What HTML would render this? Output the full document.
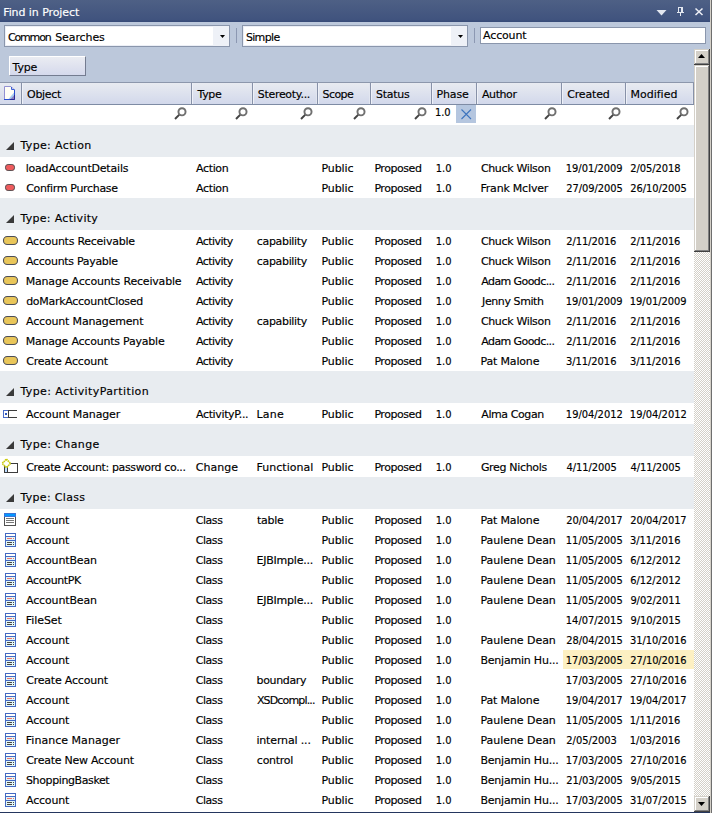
<!DOCTYPE html><html><head><meta charset="utf-8"><title>Find in Project</title><style>
html,body{margin:0;padding:0}
body{width:712px;height:813px;overflow:hidden;position:relative;background:#bcc8db;font-family:"DejaVu Sans","Liberation Sans",sans-serif;font-size:11px;color:#000}
div,span{position:absolute;white-space:nowrap;box-sizing:border-box}
span{line-height:13px;-webkit-text-stroke:0.15px currentColor}
.n{font-family:"DejaVu Sans Condensed","DejaVu Sans","Liberation Sans",sans-serif}
#title{left:0;top:0;width:710px;height:22px;background:linear-gradient(#4e6085 0,#40537e 20px,#384c79 21px,#384c79 22px)}
#title span{top:6px;color:#fff}
.combo{top:25px;height:22px;background:#fff;border:1px solid #8a96ac;box-shadow:inset 0 0 0 1px #eceff6}
.combo span{top:5px}
.combo i{position:absolute;right:0;top:0;width:16px;height:20px;background:#eef1f7}
.combo i:after{content:"";position:absolute;left:7px;top:9px;width:5px;height:3px;background:#000;clip-path:polygon(0 0,100% 0,50% 100%)}
.sep{top:28px;width:1px;height:15px;background:#8c98b2}
#btn{left:9px;top:56px;width:77px;height:20px;background:linear-gradient(#eaecf2,#d5d9ec);border:1px solid #747c90;border-top-color:#fff;border-left-color:#fff}
#btn span{top:4px}
#hdr{left:0;top:82px;width:694px;height:23px;background:linear-gradient(#e8ebf1,#d2d8eb);border-top:1px solid #8c97ac;border-bottom:1px solid #7e8ba4}
#hdr b{position:absolute;top:0;width:1px;height:21px;background:#8791a8;box-shadow:1px 0 0 #eef1f8,-1px 0 0 #e2e6f0}
#hdr span{top:5px}
#filt{left:0;top:105px;width:694px;height:20px;background:#fff}
.mag{position:absolute;top:2px}
#list{left:0;top:125px;width:694px;height:687px;background:#fff;overflow:hidden}
.g{left:0;width:694px;height:32px;background:#e8ecf0}
.g span{top:14px}
.g i{position:absolute;left:6px;top:17px;width:0;height:0;border-left:8px solid transparent;border-bottom:8px solid #3a3a3a}
.r{left:0;width:694px;height:20px}
.r span{top:4px}
.ic{position:absolute}
.hl{left:563px;top:0;width:131px;height:19px;background:#fdf0c2}
#sb{left:694px;top:49px;width:16px;height:763px;background-color:#eae8e3;background-image:conic-gradient(#fff 25%,#d4d0c8 0 50%,#fff 0 75%,#d4d0c8 0);background-size:2px 2px}
.b3{left:0;width:16px;background:#d4d0c8;box-shadow:inset -1px -1px 0 #404040,inset 1px 1px 0 #d4d0c8,inset -2px -2px 0 #808080,inset 2px 2px 0 #fff}
.b3 svg{position:absolute;left:3px}
#rb1{left:710px;top:0;width:1px;height:813px;background:#d4d0c8}
#rb2{left:711px;top:0;width:1px;height:813px;background:#6e6e6e}
#bb{left:0;top:812px;width:710px;height:1px;background:#24365e}
</style></head><body>
<div id="title"><span style="left:3.19px;letter-spacing:-0.076px;">Find in Project</span><svg style="position:absolute;left:655px;top:6px" width="52" height="12" viewBox="0 0 52 12"><path d="M1.5 4H11.5L6.5 9.5Z" fill="#e3e7f0"/><path d="M23 1H28V6H29V7H26V10H25V7H22V6H23ZM24 2V6H26V2Z" fill="#e4e8f0" fill-rule="evenodd"/><path d="M40.5 2.5L47.5 9M47.5 2.5L40.5 9" stroke="#eef0f6" stroke-width="1.5"/></svg></div>
<div class="combo" style="left:4px;width:226px"><span style="left:7.91px;letter-spacing:-1.147px;margin-left:-5px">Common</span> <span style="left:55.19px;letter-spacing:-0.096px;margin-left:-5px">Searches</span><i></i></div>
<div class="sep" style="left:236px"></div>
<div class="combo" style="left:242px;width:226px"><span style="left:245.89px;letter-spacing:-0.657px;margin-left:-243px">Simple</span><i></i></div>
<div class="sep" style="left:474px"></div>
<div class="combo" style="left:480px;top:27px;width:226px;height:17px;box-shadow:none"><span style="left:483.08px;letter-spacing:-0.16px;margin-left:-481px;top:1px">Account</span></div>
<div id="btn"><span style="left:12.6px;letter-spacing:-0.219px;margin-left:-10px">Type</span></div>
<div id="hdr"><b style="left:21px"></b><b style="left:191px"></b><b style="left:252px"></b><b style="left:317px"></b><b style="left:370px"></b><b style="left:431px"></b><b style="left:476px"></b><b style="left:561px"></b><b style="left:625px"></b><b style="left:693px"></b><span style="left:27.11px;letter-spacing:-0.313px;">Object</span><span style="left:197.5px;letter-spacing:-0.369px;">Type</span><span style="left:257.79px;letter-spacing:-0.304px;">Stereoty...</span><span style="left:322.54px;letter-spacing:-0.571px;">Scope</span><span style="left:376.04px;letter-spacing:-0.265px;">Status</span><span style="left:436.49px;letter-spacing:-0.149px;">Phase</span><span style="left:482.03px;letter-spacing:-0.43px;">Author</span><span style="left:567.16px;letter-spacing:-0.143px;">Created</span><span style="left:630.49px;letter-spacing:0.001px;">Modified</span><svg style="position:absolute;left:4px;top:3px" width="11" height="14" viewBox="0 0 11 14"><path d="M0.5 0.5H7L10.5 4V13.5H0.5Z" fill="#fffef6"/><path d="M10 6.5V13H4.5Z" fill="#a9cdf2"/><path d="M10 9.5V13H6.5Z" fill="#8a80c4"/><path d="M0.5 13V0.5H7" fill="none" stroke="#9290d2"/><path d="M7 0.5L10.5 4" stroke="#9290d2" fill="none"/><path d="M7.5 1V3.5H10" fill="none" stroke="#3a5fd6"/><path d="M10.5 3.5V13.5H0" fill="none" stroke="#2a4fd0"/><path d="M10.5 9V13.5H6" fill="none" stroke="#2c2a96"/></svg></div>
<div id="filt"><svg class="mag" style="left:174px" width="13" height="13" viewBox="0 0 13 13"><path d="M5.6 7.4L1 12" stroke="#444" stroke-width="2" stroke-linecap="butt"/><circle cx="8" cy="4.8" r="3.55" fill="#fff" stroke="#707070" stroke-width="1.95"/></svg><svg class="mag" style="left:235px" width="13" height="13" viewBox="0 0 13 13"><path d="M5.6 7.4L1 12" stroke="#444" stroke-width="2" stroke-linecap="butt"/><circle cx="8" cy="4.8" r="3.55" fill="#fff" stroke="#707070" stroke-width="1.95"/></svg><svg class="mag" style="left:300px" width="13" height="13" viewBox="0 0 13 13"><path d="M5.6 7.4L1 12" stroke="#444" stroke-width="2" stroke-linecap="butt"/><circle cx="8" cy="4.8" r="3.55" fill="#fff" stroke="#707070" stroke-width="1.95"/></svg><svg class="mag" style="left:353px" width="13" height="13" viewBox="0 0 13 13"><path d="M5.6 7.4L1 12" stroke="#444" stroke-width="2" stroke-linecap="butt"/><circle cx="8" cy="4.8" r="3.55" fill="#fff" stroke="#707070" stroke-width="1.95"/></svg><svg class="mag" style="left:414px" width="13" height="13" viewBox="0 0 13 13"><path d="M5.6 7.4L1 12" stroke="#444" stroke-width="2" stroke-linecap="butt"/><circle cx="8" cy="4.8" r="3.55" fill="#fff" stroke="#707070" stroke-width="1.95"/></svg><svg class="mag" style="left:544px" width="13" height="13" viewBox="0 0 13 13"><path d="M5.6 7.4L1 12" stroke="#444" stroke-width="2" stroke-linecap="butt"/><circle cx="8" cy="4.8" r="3.55" fill="#fff" stroke="#707070" stroke-width="1.95"/></svg><svg class="mag" style="left:608px" width="13" height="13" viewBox="0 0 13 13"><path d="M5.6 7.4L1 12" stroke="#444" stroke-width="2" stroke-linecap="butt"/><circle cx="8" cy="4.8" r="3.55" fill="#fff" stroke="#707070" stroke-width="1.95"/></svg><svg class="mag" style="left:676px" width="13" height="13" viewBox="0 0 13 13"><path d="M5.6 7.4L1 12" stroke="#444" stroke-width="2" stroke-linecap="butt"/><circle cx="8" cy="4.8" r="3.55" fill="#fff" stroke="#707070" stroke-width="1.95"/></svg><span class="n" style="left:435.05px;letter-spacing:-0.176px;top:1px">1.0</span><div style="left:456px;top:0;width:20px;height:18px;background:#b5c6df"><svg style="position:absolute;left:5px;top:4px" width="11" height="11" viewBox="0 0 11 11"><path d="M0.5 0.5L10 10M10 0.5L0.5 10" stroke="#3d74be" stroke-width="1.1"/></svg></div></div>
<div id="list"><div class="g" style="top:0px"><i></i><span style="left:20.4px;letter-spacing:0.361px;">Type: Action</span></div><div class="r" style="top:33px"><svg class="ic" style="left:4px;top:5px" width="12" height="9" viewBox="0 0 12 9"><rect x="1.5" y="1.5" width="9" height="6" rx="2.6" ry="2.6" fill="#ee5b5d" stroke="#5a5052" stroke-width="1"/></svg><span style="left:25.65px;letter-spacing:-0.187px;">loadAccountDetails</span><span style="left:196.03px;letter-spacing:-0.351px;">Action</span><span style="left:321.39px;letter-spacing:-0.071px;">Public</span><span style="left:374.39px;letter-spacing:-0.446px;">Proposed</span><span class="n" style="left:435.85px;letter-spacing:-0.076px;">1.0</span><span style="left:480.91px;letter-spacing:-0.343px;">Chuck Wilson</span><span class="n" style="left:565.85px;letter-spacing:-0.039px;">19/01/2009</span><span class="n" style="left:630.34px;letter-spacing:-0.076px;">2/05/2018</span></div><div class="r" style="top:53px"><svg class="ic" style="left:4px;top:5px" width="12" height="9" viewBox="0 0 12 9"><rect x="1.5" y="1.5" width="9" height="6" rx="2.6" ry="2.6" fill="#ee5b5d" stroke="#5a5052" stroke-width="1"/></svg><span style="left:26.16px;letter-spacing:-0.334px;">Confirm Purchase</span><span style="left:196.03px;letter-spacing:-0.351px;">Action</span><span style="left:321.39px;letter-spacing:-0.071px;">Public</span><span style="left:374.39px;letter-spacing:-0.446px;">Proposed</span><span class="n" style="left:435.85px;letter-spacing:-0.076px;">1.0</span><span style="left:480.49px;letter-spacing:-0.213px;">Frank McIver</span><span class="n" style="left:566.34px;letter-spacing:-0.075px;">27/09/2005</span><span class="n" style="left:630.34px;letter-spacing:-0.075px;">26/10/2005</span></div><div class="g" style="top:73px"><i></i><span style="left:20.4px;letter-spacing:0.299px;">Type: Activity</span></div><div class="r" style="top:106px"><svg class="ic" style="left:2px;top:4px" width="17" height="11" viewBox="0 0 17 11"><rect x="1.5" y="1.5" width="14" height="8" rx="3.8" ry="3.8" fill="#e9c65a" stroke="#4c4e58" stroke-width="1.1"/></svg><span style="left:26.03px;letter-spacing:-0.252px;">Accounts Receivable</span><span style="left:196.03px;letter-spacing:-0.553px;">Activity</span><span style="left:256.87px;letter-spacing:-0.343px;">capability</span><span style="left:321.39px;letter-spacing:-0.071px;">Public</span><span style="left:374.39px;letter-spacing:-0.446px;">Proposed</span><span class="n" style="left:435.85px;letter-spacing:-0.076px;">1.0</span><span style="left:480.91px;letter-spacing:-0.343px;">Chuck Wilson</span><span class="n" style="left:566.34px;letter-spacing:-0.082px;">2/11/2016</span><span class="n" style="left:630.34px;letter-spacing:-0.082px;">2/11/2016</span></div><div class="r" style="top:126px"><svg class="ic" style="left:2px;top:4px" width="17" height="11" viewBox="0 0 17 11"><rect x="1.5" y="1.5" width="14" height="8" rx="3.8" ry="3.8" fill="#e9c65a" stroke="#4c4e58" stroke-width="1.1"/></svg><span style="left:26.03px;letter-spacing:-0.302px;">Accounts Payable</span><span style="left:196.03px;letter-spacing:-0.553px;">Activity</span><span style="left:256.87px;letter-spacing:-0.343px;">capability</span><span style="left:321.39px;letter-spacing:-0.071px;">Public</span><span style="left:374.39px;letter-spacing:-0.446px;">Proposed</span><span class="n" style="left:435.85px;letter-spacing:-0.076px;">1.0</span><span style="left:480.91px;letter-spacing:-0.343px;">Chuck Wilson</span><span class="n" style="left:566.34px;letter-spacing:-0.082px;">2/11/2016</span><span class="n" style="left:630.34px;letter-spacing:-0.082px;">2/11/2016</span></div><div class="r" style="top:146px"><svg class="ic" style="left:2px;top:4px" width="17" height="11" viewBox="0 0 17 11"><rect x="1.5" y="1.5" width="14" height="8" rx="3.8" ry="3.8" fill="#e9c65a" stroke="#4c4e58" stroke-width="1.1"/></svg><span style="left:25.74px;letter-spacing:-0.194px;">Manage Accounts Receivable</span><span style="left:196.03px;letter-spacing:-0.553px;">Activity</span><span style="left:321.39px;letter-spacing:-0.071px;">Public</span><span style="left:374.39px;letter-spacing:-0.446px;">Proposed</span><span class="n" style="left:435.85px;letter-spacing:-0.076px;">1.0</span><span style="left:481.28px;letter-spacing:-0.587px;">Adam Goodc...</span><span class="n" style="left:566.34px;letter-spacing:-0.082px;">2/11/2016</span><span class="n" style="left:630.34px;letter-spacing:-0.082px;">2/11/2016</span></div><div class="r" style="top:166px"><svg class="ic" style="left:2px;top:4px" width="17" height="11" viewBox="0 0 17 11"><rect x="1.5" y="1.5" width="14" height="8" rx="3.8" ry="3.8" fill="#e9c65a" stroke="#4c4e58" stroke-width="1.1"/></svg><span style="left:26.13px;letter-spacing:-0.28px;">doMarkAccountClosed</span><span style="left:196.03px;letter-spacing:-0.553px;">Activity</span><span style="left:321.39px;letter-spacing:-0.071px;">Public</span><span style="left:374.39px;letter-spacing:-0.446px;">Proposed</span><span class="n" style="left:435.85px;letter-spacing:-0.076px;">1.0</span><span style="left:482.1px;letter-spacing:-0.413px;">Jenny Smith</span><span class="n" style="left:565.85px;letter-spacing:-0.039px;">19/01/2009</span><span class="n" style="left:629.85px;letter-spacing:-0.039px;">19/01/2009</span></div><div class="r" style="top:186px"><svg class="ic" style="left:2px;top:4px" width="17" height="11" viewBox="0 0 17 11"><rect x="1.5" y="1.5" width="14" height="8" rx="3.8" ry="3.8" fill="#e9c65a" stroke="#4c4e58" stroke-width="1.1"/></svg><span style="left:26.03px;letter-spacing:-0.171px;">Account Management</span><span style="left:196.03px;letter-spacing:-0.553px;">Activity</span><span style="left:256.87px;letter-spacing:-0.343px;">capability</span><span style="left:321.39px;letter-spacing:-0.071px;">Public</span><span style="left:374.39px;letter-spacing:-0.446px;">Proposed</span><span class="n" style="left:435.85px;letter-spacing:-0.076px;">1.0</span><span style="left:480.91px;letter-spacing:-0.343px;">Chuck Wilson</span><span class="n" style="left:566.34px;letter-spacing:-0.082px;">2/11/2016</span><span class="n" style="left:630.34px;letter-spacing:-0.082px;">2/11/2016</span></div><div class="r" style="top:206px"><svg class="ic" style="left:2px;top:4px" width="17" height="11" viewBox="0 0 17 11"><rect x="1.5" y="1.5" width="14" height="8" rx="3.8" ry="3.8" fill="#e9c65a" stroke="#4c4e58" stroke-width="1.1"/></svg><span style="left:25.74px;letter-spacing:-0.22px;">Manage Accounts Payable</span><span style="left:196.03px;letter-spacing:-0.553px;">Activity</span><span style="left:321.39px;letter-spacing:-0.071px;">Public</span><span style="left:374.39px;letter-spacing:-0.446px;">Proposed</span><span class="n" style="left:435.85px;letter-spacing:-0.076px;">1.0</span><span style="left:481.28px;letter-spacing:-0.587px;">Adam Goodc...</span><span class="n" style="left:566.34px;letter-spacing:-0.082px;">2/11/2016</span><span class="n" style="left:630.34px;letter-spacing:-0.082px;">2/11/2016</span></div><div class="r" style="top:226px"><svg class="ic" style="left:2px;top:4px" width="17" height="11" viewBox="0 0 17 11"><rect x="1.5" y="1.5" width="14" height="8" rx="3.8" ry="3.8" fill="#e9c65a" stroke="#4c4e58" stroke-width="1.1"/></svg><span style="left:26.16px;letter-spacing:-0.194px;">Create Account</span><span style="left:196.03px;letter-spacing:-0.553px;">Activity</span><span style="left:321.39px;letter-spacing:-0.071px;">Public</span><span style="left:374.39px;letter-spacing:-0.446px;">Proposed</span><span class="n" style="left:435.85px;letter-spacing:-0.076px;">1.0</span><span style="left:480.49px;letter-spacing:-0.166px;">Pat Malone</span><span class="n" style="left:566.0px;letter-spacing:-0.039px;">3/11/2016</span><span class="n" style="left:630.0px;letter-spacing:-0.039px;">3/11/2016</span></div><div class="g" style="top:246px"><i></i><span style="left:20.4px;letter-spacing:0.403px;">Type: ActivityPartition</span></div><div class="r" style="top:279px"><svg shape-rendering="crispEdges" class="ic" style="left:3px;top:6px" width="15" height="8" viewBox="0 0 15 8"><path d="M5.5 0.5H14M5.5 7.5H14M5.5 0V8" stroke="#3c3c3c" fill="none"/><path d="M5 0.5H0.5V7.5H5" fill="none" stroke="#4a6cc8"/><rect x="2" y="3" width="2" height="2" fill="#2f57c0"/></svg><span style="left:26.03px;letter-spacing:-0.136px;">Account Manager</span><span style="left:196.03px;letter-spacing:-0.366px;">ActivityP...</span><span style="left:256.49px;letter-spacing:0.253px;">Lane</span><span style="left:321.39px;letter-spacing:-0.071px;">Public</span><span style="left:374.39px;letter-spacing:-0.446px;">Proposed</span><span class="n" style="left:435.85px;letter-spacing:-0.076px;">1.0</span><span style="left:481.28px;letter-spacing:-0.405px;">Alma Cogan</span><span class="n" style="left:565.85px;letter-spacing:-0.013px;">19/04/2012</span><span class="n" style="left:629.85px;letter-spacing:-0.013px;">19/04/2012</span></div><div class="g" style="top:299px"><i></i><span style="left:20.4px;letter-spacing:0.395px;">Type: Change</span></div><div class="r" style="top:332px"><svg class="ic" style="left:1px;top:1px" width="18" height="16" viewBox="0 0 18 16"><rect x="3.5" y="5.5" width="13" height="9" fill="#fff" stroke="#3c3c3c"/><path d="M6.5 5.5V14.5" stroke="#3c3c3c"/><rect x="4" y="8" width="2" height="6" fill="#bddcff"/><path d="M5.4 1.2L9.6 5.4L5.4 9.6L1.2 5.4Z" fill="#fff" stroke="#c9cb10" stroke-width="1.7" stroke-dasharray="1.5 0.5"/></svg><span style="left:26.16px;letter-spacing:-0.368px;">Create Account: password co...</span><span style="left:195.66px;letter-spacing:0.046px;">Change</span><span style="left:256.49px;letter-spacing:0.032px;">Functional</span><span style="left:321.39px;letter-spacing:-0.071px;">Public</span><span style="left:374.39px;letter-spacing:-0.446px;">Proposed</span><span class="n" style="left:435.85px;letter-spacing:-0.076px;">1.0</span><span style="left:480.91px;letter-spacing:-0.323px;">Greg Nichols</span><span class="n" style="left:566.6px;letter-spacing:-0.06px;">4/11/2005</span><span class="n" style="left:630.6px;letter-spacing:-0.06px;">4/11/2005</span></div><div class="g" style="top:352px"><i></i><span style="left:20.4px;letter-spacing:0.318px;">Type: Class</span></div><div class="r" style="top:385px"><svg shape-rendering="crispEdges" class="ic" style="left:4px;top:3px" width="12" height="13" viewBox="0 0 12 13"><rect x="0.5" y="0.5" width="11" height="12" fill="#fff" stroke="#505050"/><rect x="0" y="0" width="12" height="4" fill="#3a74d8"/><rect x="1" y="1" width="10" height="2" fill="#0497ff"/><path d="M2 5.5H10M2 7.5H10M2 9.5H10" stroke="#777"/></svg><span style="left:26.03px;letter-spacing:-0.193px;">Account</span><span style="left:195.66px;letter-spacing:-0.424px;">Class</span><span style="left:257.11px;letter-spacing:-0.305px;">table</span><span style="left:321.39px;letter-spacing:-0.071px;">Public</span><span style="left:374.39px;letter-spacing:-0.446px;">Proposed</span><span class="n" style="left:435.85px;letter-spacing:-0.076px;">1.0</span><span style="left:480.49px;letter-spacing:-0.166px;">Pat Malone</span><span class="n" style="left:566.34px;letter-spacing:-0.078px;">20/04/2017</span><span class="n" style="left:630.34px;letter-spacing:-0.078px;">20/04/2017</span></div><div class="r" style="top:405px"><svg shape-rendering="crispEdges" class="ic" style="left:5px;top:3px" width="11" height="14" viewBox="0 0 11 14"><rect x="0.5" y="0.5" width="10" height="13" fill="#e2f8f8" stroke="#4369c2"/><rect x="1" y="1" width="9" height="2" fill="#fff"/><path d="M0.5 3.5H10.5M0.5 7.5H10.5" stroke="#4369c2"/><path d="M2 5.5H7M8 5.5H9" stroke="#ee7070"/><path d="M2 9.5H7M8 9.5H9M2 11.5H7M8 11.5H9" stroke="#4a4444"/></svg><span style="left:26.03px;letter-spacing:-0.193px;">Account</span><span style="left:195.66px;letter-spacing:-0.424px;">Class</span><span style="left:321.39px;letter-spacing:-0.071px;">Public</span><span style="left:374.39px;letter-spacing:-0.446px;">Proposed</span><span class="n" style="left:435.85px;letter-spacing:-0.076px;">1.0</span><span style="left:480.49px;letter-spacing:-0.047px;">Paulene Dean</span><span class="n" style="left:565.85px;letter-spacing:-0.021px;">11/05/2005</span><span class="n" style="left:630.0px;letter-spacing:-0.039px;">3/11/2016</span></div><div class="r" style="top:425px"><svg shape-rendering="crispEdges" class="ic" style="left:5px;top:3px" width="11" height="14" viewBox="0 0 11 14"><rect x="0.5" y="0.5" width="10" height="13" fill="#e2f8f8" stroke="#4369c2"/><rect x="1" y="1" width="9" height="2" fill="#fff"/><path d="M0.5 3.5H10.5M0.5 7.5H10.5" stroke="#4369c2"/><path d="M2 5.5H7M8 5.5H9" stroke="#ee7070"/><path d="M2 9.5H7M8 9.5H9M2 11.5H7M8 11.5H9" stroke="#4a4444"/></svg><span style="left:26.03px;letter-spacing:-0.15px;">AccountBean</span><span style="left:195.66px;letter-spacing:-0.424px;">Class</span><span style="left:256.49px;letter-spacing:-0.222px;">EJBImple...</span><span style="left:321.39px;letter-spacing:-0.071px;">Public</span><span style="left:374.39px;letter-spacing:-0.446px;">Proposed</span><span class="n" style="left:435.85px;letter-spacing:-0.076px;">1.0</span><span style="left:480.49px;letter-spacing:-0.047px;">Paulene Dean</span><span class="n" style="left:565.85px;letter-spacing:-0.021px;">11/05/2005</span><span class="n" style="left:630.32px;letter-spacing:-0.04px;">6/12/2012</span></div><div class="r" style="top:445px"><svg shape-rendering="crispEdges" class="ic" style="left:5px;top:3px" width="11" height="14" viewBox="0 0 11 14"><rect x="0.5" y="0.5" width="10" height="13" fill="#e2f8f8" stroke="#4369c2"/><rect x="1" y="1" width="9" height="2" fill="#fff"/><path d="M0.5 3.5H10.5M0.5 7.5H10.5" stroke="#4369c2"/><path d="M2 5.5H7M8 5.5H9" stroke="#ee7070"/><path d="M2 9.5H7M8 9.5H9M2 11.5H7M8 11.5H9" stroke="#4a4444"/></svg><span style="left:26.03px;letter-spacing:-0.374px;">AccountPK</span><span style="left:195.66px;letter-spacing:-0.424px;">Class</span><span style="left:321.39px;letter-spacing:-0.071px;">Public</span><span style="left:374.39px;letter-spacing:-0.446px;">Proposed</span><span class="n" style="left:435.85px;letter-spacing:-0.076px;">1.0</span><span style="left:480.49px;letter-spacing:-0.047px;">Paulene Dean</span><span class="n" style="left:565.85px;letter-spacing:-0.021px;">11/05/2005</span><span class="n" style="left:630.32px;letter-spacing:-0.04px;">6/12/2012</span></div><div class="r" style="top:465px"><svg shape-rendering="crispEdges" class="ic" style="left:5px;top:3px" width="11" height="14" viewBox="0 0 11 14"><rect x="0.5" y="0.5" width="10" height="13" fill="#e2f8f8" stroke="#4369c2"/><rect x="1" y="1" width="9" height="2" fill="#fff"/><path d="M0.5 3.5H10.5M0.5 7.5H10.5" stroke="#4369c2"/><path d="M2 5.5H7M8 5.5H9" stroke="#ee7070"/><path d="M2 9.5H7M8 9.5H9M2 11.5H7M8 11.5H9" stroke="#4a4444"/></svg><span style="left:26.03px;letter-spacing:-0.15px;">AccountBean</span><span style="left:195.66px;letter-spacing:-0.424px;">Class</span><span style="left:256.49px;letter-spacing:-0.222px;">EJBImple...</span><span style="left:321.39px;letter-spacing:-0.071px;">Public</span><span style="left:374.39px;letter-spacing:-0.446px;">Proposed</span><span class="n" style="left:435.85px;letter-spacing:-0.076px;">1.0</span><span style="left:480.49px;letter-spacing:-0.047px;">Paulene Dean</span><span class="n" style="left:565.85px;letter-spacing:-0.021px;">11/05/2005</span><span class="n" style="left:630.38px;letter-spacing:-0.048px;">9/02/2011</span></div><div class="r" style="top:485px"><svg shape-rendering="crispEdges" class="ic" style="left:5px;top:3px" width="11" height="14" viewBox="0 0 11 14"><rect x="0.5" y="0.5" width="10" height="13" fill="#e2f8f8" stroke="#4369c2"/><rect x="1" y="1" width="9" height="2" fill="#fff"/><path d="M0.5 3.5H10.5M0.5 7.5H10.5" stroke="#4369c2"/><path d="M2 5.5H7M8 5.5H9" stroke="#ee7070"/><path d="M2 9.5H7M8 9.5H9M2 11.5H7M8 11.5H9" stroke="#4a4444"/></svg><span style="left:25.74px;letter-spacing:-0.058px;">FileSet</span><span style="left:195.66px;letter-spacing:-0.424px;">Class</span><span style="left:321.39px;letter-spacing:-0.071px;">Public</span><span style="left:374.39px;letter-spacing:-0.446px;">Proposed</span><span class="n" style="left:435.85px;letter-spacing:-0.076px;">1.0</span><span class="n" style="left:565.85px;letter-spacing:-0.021px;">14/07/2015</span><span class="n" style="left:630.38px;letter-spacing:-0.032px;">9/10/2015</span></div><div class="r" style="top:505px"><svg shape-rendering="crispEdges" class="ic" style="left:5px;top:3px" width="11" height="14" viewBox="0 0 11 14"><rect x="0.5" y="0.5" width="10" height="13" fill="#e2f8f8" stroke="#4369c2"/><rect x="1" y="1" width="9" height="2" fill="#fff"/><path d="M0.5 3.5H10.5M0.5 7.5H10.5" stroke="#4369c2"/><path d="M2 5.5H7M8 5.5H9" stroke="#ee7070"/><path d="M2 9.5H7M8 9.5H9M2 11.5H7M8 11.5H9" stroke="#4a4444"/></svg><span style="left:26.03px;letter-spacing:-0.193px;">Account</span><span style="left:195.66px;letter-spacing:-0.424px;">Class</span><span style="left:321.39px;letter-spacing:-0.071px;">Public</span><span style="left:374.39px;letter-spacing:-0.446px;">Proposed</span><span class="n" style="left:435.85px;letter-spacing:-0.076px;">1.0</span><span style="left:480.49px;letter-spacing:-0.047px;">Paulene Dean</span><span class="n" style="left:566.34px;letter-spacing:-0.075px;">28/04/2015</span><span class="n" style="left:630.0px;letter-spacing:-0.06px;">31/10/2016</span></div><div class="r" style="top:525px"><div class="hl"></div><svg shape-rendering="crispEdges" class="ic" style="left:5px;top:3px" width="11" height="14" viewBox="0 0 11 14"><rect x="0.5" y="0.5" width="10" height="13" fill="#e2f8f8" stroke="#4369c2"/><rect x="1" y="1" width="9" height="2" fill="#fff"/><path d="M0.5 3.5H10.5M0.5 7.5H10.5" stroke="#4369c2"/><path d="M2 5.5H7M8 5.5H9" stroke="#ee7070"/><path d="M2 9.5H7M8 9.5H9M2 11.5H7M8 11.5H9" stroke="#4a4444"/></svg><span style="left:26.03px;letter-spacing:-0.193px;">Account</span><span style="left:195.66px;letter-spacing:-0.424px;">Class</span><span style="left:321.39px;letter-spacing:-0.071px;">Public</span><span style="left:374.39px;letter-spacing:-0.446px;">Proposed</span><span class="n" style="left:435.85px;letter-spacing:-0.076px;">1.0</span><span style="left:480.49px;letter-spacing:-0.217px;">Benjamin Hu...</span><span class="n" style="left:565.85px;letter-spacing:-0.021px;">17/03/2005</span><span class="n" style="left:630.34px;letter-spacing:-0.098px;">27/10/2016</span></div><div class="r" style="top:545px"><svg shape-rendering="crispEdges" class="ic" style="left:5px;top:3px" width="11" height="14" viewBox="0 0 11 14"><rect x="0.5" y="0.5" width="10" height="13" fill="#e2f8f8" stroke="#4369c2"/><rect x="1" y="1" width="9" height="2" fill="#fff"/><path d="M0.5 3.5H10.5M0.5 7.5H10.5" stroke="#4369c2"/><path d="M2 5.5H7M8 5.5H9" stroke="#ee7070"/><path d="M2 9.5H7M8 9.5H9M2 11.5H7M8 11.5H9" stroke="#4a4444"/></svg><span style="left:26.16px;letter-spacing:-0.194px;">Create Account</span><span style="left:195.66px;letter-spacing:-0.424px;">Class</span><span style="left:256.5px;letter-spacing:-0.345px;">boundary</span><span style="left:321.39px;letter-spacing:-0.071px;">Public</span><span style="left:374.39px;letter-spacing:-0.446px;">Proposed</span><span class="n" style="left:435.85px;letter-spacing:-0.076px;">1.0</span><span class="n" style="left:565.85px;letter-spacing:-0.021px;">17/03/2005</span><span class="n" style="left:630.34px;letter-spacing:-0.098px;">27/10/2016</span></div><div class="r" style="top:565px"><svg shape-rendering="crispEdges" class="ic" style="left:5px;top:3px" width="11" height="14" viewBox="0 0 11 14"><rect x="0.5" y="0.5" width="10" height="13" fill="#e2f8f8" stroke="#4369c2"/><rect x="1" y="1" width="9" height="2" fill="#fff"/><path d="M0.5 3.5H10.5M0.5 7.5H10.5" stroke="#4369c2"/><path d="M2 5.5H7M8 5.5H9" stroke="#ee7070"/><path d="M2 9.5H7M8 9.5H9M2 11.5H7M8 11.5H9" stroke="#4a4444"/></svg><span style="left:26.03px;letter-spacing:-0.193px;">Account</span><span style="left:195.66px;letter-spacing:-0.424px;">Class</span><span style="left:256.9px;letter-spacing:-0.844px;">XSDcompl...</span><span style="left:321.39px;letter-spacing:-0.071px;">Public</span><span style="left:374.39px;letter-spacing:-0.446px;">Proposed</span><span class="n" style="left:435.85px;letter-spacing:-0.076px;">1.0</span><span style="left:480.49px;letter-spacing:-0.166px;">Pat Malone</span><span class="n" style="left:565.85px;letter-spacing:-0.023px;">19/04/2017</span><span class="n" style="left:629.85px;letter-spacing:-0.023px;">19/04/2017</span></div><div class="r" style="top:585px"><svg shape-rendering="crispEdges" class="ic" style="left:5px;top:3px" width="11" height="14" viewBox="0 0 11 14"><rect x="0.5" y="0.5" width="10" height="13" fill="#e2f8f8" stroke="#4369c2"/><rect x="1" y="1" width="9" height="2" fill="#fff"/><path d="M0.5 3.5H10.5M0.5 7.5H10.5" stroke="#4369c2"/><path d="M2 5.5H7M8 5.5H9" stroke="#ee7070"/><path d="M2 9.5H7M8 9.5H9M2 11.5H7M8 11.5H9" stroke="#4a4444"/></svg><span style="left:26.03px;letter-spacing:-0.193px;">Account</span><span style="left:195.66px;letter-spacing:-0.424px;">Class</span><span style="left:321.39px;letter-spacing:-0.071px;">Public</span><span style="left:374.39px;letter-spacing:-0.446px;">Proposed</span><span class="n" style="left:435.85px;letter-spacing:-0.076px;">1.0</span><span style="left:480.49px;letter-spacing:-0.047px;">Paulene Dean</span><span class="n" style="left:565.85px;letter-spacing:-0.021px;">11/05/2005</span><span class="n" style="left:629.85px;letter-spacing:-0.02px;">1/11/2016</span></div><div class="r" style="top:605px"><svg shape-rendering="crispEdges" class="ic" style="left:5px;top:3px" width="11" height="14" viewBox="0 0 11 14"><rect x="0.5" y="0.5" width="10" height="13" fill="#e2f8f8" stroke="#4369c2"/><rect x="1" y="1" width="9" height="2" fill="#fff"/><path d="M0.5 3.5H10.5M0.5 7.5H10.5" stroke="#4369c2"/><path d="M2 5.5H7M8 5.5H9" stroke="#ee7070"/><path d="M2 9.5H7M8 9.5H9M2 11.5H7M8 11.5H9" stroke="#4a4444"/></svg><span style="left:25.74px;letter-spacing:0.035px;">Finance Manager</span><span style="left:195.66px;letter-spacing:-0.424px;">Class</span><span style="left:256.4px;letter-spacing:-0.151px;">internal ...</span><span style="left:321.39px;letter-spacing:-0.071px;">Public</span><span style="left:374.39px;letter-spacing:-0.446px;">Proposed</span><span class="n" style="left:435.85px;letter-spacing:-0.076px;">1.0</span><span style="left:480.49px;letter-spacing:-0.047px;">Paulene Dean</span><span class="n" style="left:566.34px;letter-spacing:-0.029px;">2/05/2003</span><span class="n" style="left:629.85px;letter-spacing:-0.02px;">1/03/2016</span></div><div class="r" style="top:625px"><svg shape-rendering="crispEdges" class="ic" style="left:5px;top:3px" width="11" height="14" viewBox="0 0 11 14"><rect x="0.5" y="0.5" width="10" height="13" fill="#e2f8f8" stroke="#4369c2"/><rect x="1" y="1" width="9" height="2" fill="#fff"/><path d="M0.5 3.5H10.5M0.5 7.5H10.5" stroke="#4369c2"/><path d="M2 5.5H7M8 5.5H9" stroke="#ee7070"/><path d="M2 9.5H7M8 9.5H9M2 11.5H7M8 11.5H9" stroke="#4a4444"/></svg><span style="left:26.16px;letter-spacing:-0.245px;">Create New Account</span><span style="left:195.66px;letter-spacing:-0.424px;">Class</span><span style="left:256.87px;letter-spacing:-0.266px;">control</span><span style="left:321.39px;letter-spacing:-0.071px;">Public</span><span style="left:374.39px;letter-spacing:-0.446px;">Proposed</span><span class="n" style="left:435.85px;letter-spacing:-0.076px;">1.0</span><span style="left:480.49px;letter-spacing:-0.217px;">Benjamin Hu...</span><span class="n" style="left:565.85px;letter-spacing:-0.021px;">17/03/2005</span><span class="n" style="left:630.34px;letter-spacing:-0.098px;">27/10/2016</span></div><div class="r" style="top:645px"><svg shape-rendering="crispEdges" class="ic" style="left:5px;top:3px" width="11" height="14" viewBox="0 0 11 14"><rect x="0.5" y="0.5" width="10" height="13" fill="#e2f8f8" stroke="#4369c2"/><rect x="1" y="1" width="9" height="2" fill="#fff"/><path d="M0.5 3.5H10.5M0.5 7.5H10.5" stroke="#4369c2"/><path d="M2 5.5H7M8 5.5H9" stroke="#ee7070"/><path d="M2 9.5H7M8 9.5H9M2 11.5H7M8 11.5H9" stroke="#4a4444"/></svg><span style="left:26.04px;letter-spacing:-0.392px;">ShoppingBasket</span><span style="left:195.66px;letter-spacing:-0.424px;">Class</span><span style="left:321.39px;letter-spacing:-0.071px;">Public</span><span style="left:374.39px;letter-spacing:-0.446px;">Proposed</span><span class="n" style="left:435.85px;letter-spacing:-0.076px;">1.0</span><span style="left:480.49px;letter-spacing:-0.217px;">Benjamin Hu...</span><span class="n" style="left:566.34px;letter-spacing:-0.075px;">21/03/2005</span><span class="n" style="left:630.38px;letter-spacing:-0.032px;">9/05/2015</span></div><div class="r" style="top:665px"><svg shape-rendering="crispEdges" class="ic" style="left:5px;top:3px" width="11" height="14" viewBox="0 0 11 14"><rect x="0.5" y="0.5" width="10" height="13" fill="#e2f8f8" stroke="#4369c2"/><rect x="1" y="1" width="9" height="2" fill="#fff"/><path d="M0.5 3.5H10.5M0.5 7.5H10.5" stroke="#4369c2"/><path d="M2 5.5H7M8 5.5H9" stroke="#ee7070"/><path d="M2 9.5H7M8 9.5H9M2 11.5H7M8 11.5H9" stroke="#4a4444"/></svg><span style="left:26.03px;letter-spacing:-0.193px;">Account</span><span style="left:195.66px;letter-spacing:-0.424px;">Class</span><span style="left:321.39px;letter-spacing:-0.071px;">Public</span><span style="left:374.39px;letter-spacing:-0.446px;">Proposed</span><span class="n" style="left:435.85px;letter-spacing:-0.076px;">1.0</span><span style="left:480.49px;letter-spacing:-0.217px;">Benjamin Hu...</span><span class="n" style="left:565.85px;letter-spacing:-0.021px;">17/03/2005</span><span class="n" style="left:630.0px;letter-spacing:-0.037px;">31/07/2015</span></div></div>
<div id="sb"><div class="b3" style="top:0;height:16px"><svg style="top:5px" width="9" height="5" viewBox="0 0 9 5"><path d="M1 4H8L4.5 0Z" fill="#000"/></svg></div><div class="b3" style="top:16px;height:187px"></div><div class="b3" style="top:747px;height:16px"><svg style="top:6px" width="9" height="5" viewBox="0 0 9 5"><path d="M1 0H8L4.5 4Z" fill="#000"/></svg></div></div>
<div id="bb"></div><div id="rb1"></div><div id="rb2"></div>
</body></html>
